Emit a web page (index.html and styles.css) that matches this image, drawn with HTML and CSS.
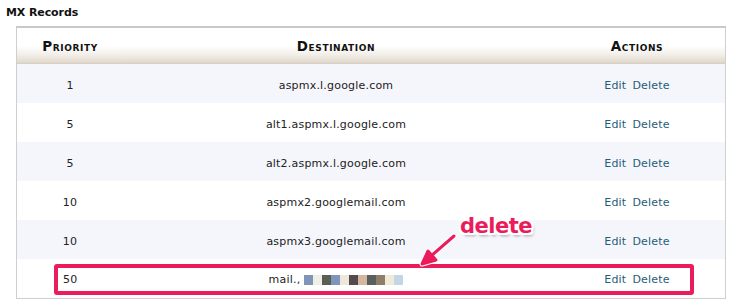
FILE: index.html
```html
<!DOCTYPE html>
<html>
<head>
<meta charset="utf-8">
<link rel="stylesheet" href="styles.css">
</head>
<body>
<div class="page">
  <h2 class="title">MX Records</h2>
  <div class="wrap">
    <table class="records">
      <thead>
        <tr>
          <th class="c-pri">Priority</th>
          <th class="c-dest">Destination</th>
          <th class="c-act">Actions</th>
        </tr>
      </thead>
      <tbody>
        <tr class="alt"><td>1</td><td>aspmx.l.google.com</td><td class="acts"><a>Edit</a><a>Delete</a></td></tr>
        <tr><td>5</td><td>alt1.aspmx.l.google.com</td><td class="acts"><a>Edit</a><a>Delete</a></td></tr>
        <tr class="alt"><td>5</td><td>alt2.aspmx.l.google.com</td><td class="acts"><a>Edit</a><a>Delete</a></td></tr>
        <tr><td>10</td><td>aspmx2.googlemail.com</td><td class="acts"><a>Edit</a><a>Delete</a></td></tr>
        <tr class="alt"><td>10</td><td>aspmx3.googlemail.com</td><td class="acts"><a>Edit</a><a>Delete</a></td></tr>
        <tr class="last"><td class="left">50</td><td>mail.,<span class="pix"><i style="background:#7f94b8"></i><i style="background:#eef0e6"></i><i style="background:#5b5e52"></i><i style="background:#8095bb"></i><i style="background:#efe6dc"></i><i style="background:#544a4e"></i><i style="background:#d4b79e"></i><i style="background:#5a5f5c"></i><i style="background:#8f7f6a"></i><i style="background:#f0ebd9"></i><i style="background:#c3d6e6"></i></span></td><td class="acts"><a>Edit</a><a>Delete</a></td></tr>
      </tbody>
    </table>
    <div class="hl-box"></div>
    <div class="note">delete</div>
    <svg class="arrow" width="50" height="36" viewBox="0 0 50 36">
      <g stroke="#fff" stroke-width="5" stroke-linecap="round" fill="#fff" stroke-linejoin="round">
        <line x1="36" y1="5" x2="12" y2="26"/>
        <polygon points="4,33 10,20 18,29"/>
      </g>
      <g stroke="#eb1c5c" stroke-width="3" stroke-linecap="round" fill="#eb1c5c" stroke-linejoin="round">
        <line x1="36" y1="5" x2="12" y2="26"/>
        <polygon points="4,33 10,20 18,29"/>
      </g>
    </svg>
  </div>
</div>
</body>
</html>
```
FILE: styles.css
```css
html, body {
  margin: 0;
  padding: 0;
  background: #fff;
}
.page {
  width: 736px;
  height: 308px;
  font-family: "DejaVu Sans", Verdana, sans-serif;
  color: #222;
}
.title {
  margin: 0;
  padding: 6px 0 0 6px;
  height: 26px;
  box-sizing: border-box;
  font-size: 11px;
  font-weight: bold;
  color: #111;
  letter-spacing: -0.1px;
}
.wrap {
  position: relative;
  margin-left: 16px;
  width: 710px;
}
.records {
  width: 710px;
  border-collapse: collapse;
  border: 1px solid #cfcfcf;
  border-top: 2px solid #c8c8c8;
  font-size: 11px;
  letter-spacing: 0.2px;
}
.records th {
  height: 36px;
  padding: 0;
  font-variant: small-caps;
  font-size: 13.5px;
  font-weight: bold;
  color: #111;
  letter-spacing: 0.6px;
  background: linear-gradient(to bottom, #ffffff 0%, #ffffff 50%, #f3f0eb 72%, #e2dbd0 94%, #d6cdc0 100%);
  text-align: center;
}
.c-pri { width: 106px; }
.c-dest { width: 426px; }
.records td {
  box-sizing: border-box;
  height: 39px;
  padding: 3px 0 0;
  text-align: center;
  color: #222;
}
.records tr.alt td { background: #f5f6fb; }
.records td.left { text-align: left; padding-left: 46px; }
.acts a {
  color: #1f5d78;
  margin: 0 3px;
}
.pix {
  display: inline-block;
  vertical-align: -2px;
  margin-left: 4px;
  height: 10px;
}
.pix i {
  display: inline-block;
  width: 9px;
  height: 10px;
}
.hl-box {
  position: absolute;
  left: 38px;
  top: 238px;
  width: 640px;
  height: 31px;
  box-sizing: border-box;
  border: 4px solid #eb1c5c;
  border-radius: 3px;
}
.note {
  position: absolute;
  left: 444px;
  top: 188px;
  font-family: "DejaVu Sans", sans-serif;
  font-weight: bold;
  font-size: 21px;
  color: #eb1c5c;
  letter-spacing: -0.5px;
  text-shadow: -2px 0 #fff, 2px 0 #fff, 0 -2px #fff, 0 2px #fff, 2px 2px #fff, -2px -2px #fff, 2px -2px #fff, -2px 2px #fff, 2px 3px 3px rgba(0,0,0,0.35);
}
.arrow {
  position: absolute;
  left: 402px;
  top: 205px;
}
```
